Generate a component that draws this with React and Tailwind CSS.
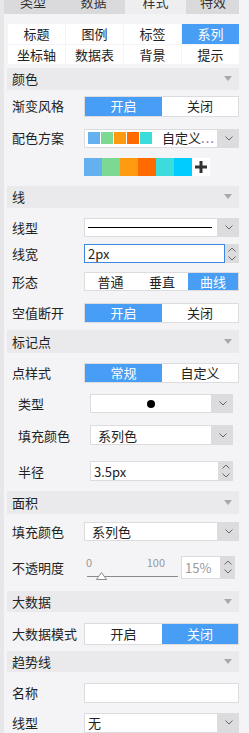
const FONT = { fontFamily: '"Noto Sans CJK SC", "Noto Sans", sans-serif' };

function Chevron({ up = false, color = '#666' }) {
  return (
    <svg width="8" height="5" viewBox="0 0 8 5" className="block">
      <path d={up ? 'M0.5 4.5 L4 1 L7.5 4.5' : 'M0.5 0.5 L4 4 L7.5 0.5'} fill="none" stroke={color} strokeWidth="1" />
    </svg>
  );
}

function Caret() {
  return (
    <svg width="8" height="5" viewBox="0 0 8 5" className="block">
      <path d="M0 0 L8 0 L4 5 Z" fill="#a9a9ad" />
    </svg>
  );
}

function Section({ title, className }) {
  return (
    <div className={`ml-[3px] flex items-center justify-between bg-[#eaeaec] pl-[5px] pr-[7px] ${className}`}>
      <span className="text-[13px] text-[#222]">{title}</span>
      <Caret />
    </div>
  );
}

function Row({ label, className, indent = false, children }) {
  return (
    <div className={`flex items-center ${className}`}>
      <div className={indent ? 'w-[86px] pl-[14px] text-[13px] text-[#222]' : 'w-[80px] pl-[8px] text-[13px] text-[#222]'}>{label}</div>
      <div className={indent ? 'h-full w-[143px]' : 'h-full w-[155px]'}>{children}</div>
    </div>
  );
}

function Toggle({ options, active, widths }) {
  return (
    <div className="flex h-full border border-[#dcdcdf] bg-white">
      {options.map((o, i) => (
        <div
          key={o}
          className={`flex items-center justify-center text-[13px] ${widths[i]} ${i === active ? 'bg-[#489ef5] text-white' : 'text-[#222]'}`}
        >
          {o}
        </div>
      ))}
    </div>
  );
}

function Select({ children }) {
  return (
    <div className="flex h-full">
      <div className="flex min-w-0 flex-1 items-center overflow-hidden whitespace-nowrap border border-[#dcdcdf] bg-white pl-[3px] text-[13px] text-[#222]">
        {children}
      </div>
      <div className="flex w-[21px] shrink-0 items-center justify-center bg-[#dcdcdf]">
        <Chevron />
      </div>
    </div>
  );
}

function Spinner({ focused, value, textColor = 'text-[#222]' }) {
  return (
    <div className="flex h-full">
      <div className={`flex flex-1 items-center bg-white pl-[3px] text-[13px] ${textColor} ${focused ? 'border border-[#3c86e4]' : 'border border-[#dcdcdf]'}`}>
        {value}
      </div>
      <div className="flex w-[14px] flex-col items-center justify-center gap-[4px] bg-[#dcdcdf]">
        <Chevron up />
        <Chevron />
      </div>
    </div>
  );
}

const swatches = ['#65b1ef', '#7bd993', '#fd9a0f', '#ff6b00', '#3cdbdc', '#00ccff'];

export default function App() {
  const tabs = [
    { t: '类型', w: 'w-[58px]' },
    { t: '数据', w: 'w-[63px]' },
    { t: '样式', w: 'w-[61px]', on: true },
    { t: '特效', w: 'w-[52px] ml-px' },
  ];
  const grid = ['标题', '图例', '标签', '系列', '坐标轴', '数据表', '背景', '提示'];
  return (
    <div className="flex h-[733px] w-[249px] overflow-hidden bg-[#f4f4f6]" style={FONT}>
      <div className="w-[4px] shrink-0 bg-[#e7e7ea]" />
      <div className="flex w-[235px] shrink-0 flex-col">
        <div className="flex h-[15px] overflow-hidden bg-[#dadadd]">
          {tabs.map((tb) => (
            <div key={tb.t} className={`h-[15px] overflow-hidden ${tb.w} ${tb.on ? 'bg-[#eeeef0]' : ''}`}>
              <div className="-mt-[6px] text-center text-[13px] leading-[15px] text-[#333]">{tb.t}</div>
            </div>
          ))}
        </div>

        <div className="ml-[4px] mt-[10px] grid h-[41px] w-[231px] grid-cols-4 gap-px">
          {grid.map((g) => (
            <div
              key={g}
              className={`flex items-center justify-center text-[13px] ${g === '系列' ? 'bg-[#489ef5] text-white' : 'bg-white text-[#222]'}`}
            >
              {g}
            </div>
          ))}
        </div>

        <Section title="颜色" className="mt-[4px] h-[23px]" />
        <Row label="渐变风格" className="mt-[6px] h-[21px]">
          <Toggle options={['开启', '关闭']} active={0} widths={['w-[77px]', 'flex-1']} />
        </Row>
        <Row label="配色方案" className="mt-[12px] h-[19px]">
          <Select>
            <div className="flex shrink-0 gap-px">
              {swatches.slice(0, 5).map((c) => (
                <div key={c} className="h-[12px] w-[12px]" style={{ backgroundColor: c }} />
              ))}
            </div>
            <span className="ml-[10px]">自定义</span>
            <span className="tracking-[1px] text-[#8a5aa8]">...</span>
          </Select>
        </Row>
        <div className="ml-[80px] mt-[10px] flex h-[18px]">
          {swatches.map((c) => (
            <div key={c} className="h-[18px] w-[18px]" style={{ backgroundColor: c }} />
          ))}
          <div className="flex h-[18px] w-[18px] items-center justify-center bg-white">
            <svg width="12" height="12" viewBox="0 0 12 12">
              <rect x="4.5" y="0" width="3" height="12" fill="#333" />
              <rect x="0" y="4.5" width="12" height="3" fill="#333" />
            </svg>
          </div>
        </div>

        <Section title="线" className="mt-[10px] h-[24px]" />
        <Row label="线型" className="mt-[10px] h-[19px]">
          <Select>
            <div className="mr-[5px] h-px flex-1 bg-black" />
          </Select>
        </Row>
        <Row label="线宽" className="mt-[7px] h-[19px]">
          <Spinner focused value="2px" />
        </Row>
        <Row label="形态" className="mt-[9px] h-[19px]">
          <Toggle options={['普通', '垂直', '曲线']} active={2} widths={['w-[51px]', 'w-[52px]', 'flex-1']} />
        </Row>
        <Row label="空值断开" className="mt-[12px] h-[20px]">
          <Toggle options={['开启', '关闭']} active={0} widths={['w-[77px]', 'flex-1']} />
        </Row>

        <Section title="标记点" className="mt-[7px] h-[24px]" />
        <Row label="点样式" className="mt-[10px] h-[20px]">
          <Toggle options={['常规', '自定义']} active={0} widths={['w-[77px]', 'flex-1']} />
        </Row>
        <Row label="类型" indent className="mt-[11px] h-[20px]">
          <Select>
            <div className="flex flex-1 justify-center pr-[3px]">
              <div className="h-[8px] w-[8px] rounded-full bg-black" />
            </div>
          </Select>
        </Row>
        <Row label="填充颜色" indent className="mt-[12px] h-[20px]">
          <Select>
            <span className="pl-[4px]">系列色</span>
          </Select>
        </Row>
        <Row label="半径" indent className="mt-[16px] h-[20px]">
          <Spinner value="3.5px" />
        </Row>

        <Section title="面积" className="mt-[10px] h-[24px]" />
        <Row label="填充颜色" className="mt-[8px] h-[19px]">
          <Select>
            <span className="pl-[4px]">系列色</span>
          </Select>
        </Row>
        <Row label="不透明度" className="mt-[15px] h-[23px]">
          <div className="flex h-full">
            <div className="flex w-[97px] flex-col pl-[2px] pr-[3px]">
              <div className="flex justify-between text-[11px] leading-[12px] text-[#9a9a9a]">
                <span>0</span>
                <span className="pr-[13px]">100</span>
              </div>
              <div className="relative mt-[4px] h-[8px]">
                <div className="absolute left-[1px] right-0 top-[4px] h-px bg-[#8a8a8a]" />
                <svg width="11" height="8" viewBox="0 0 11 8" className="absolute left-[10px] top-0">
                  <path d="M5.5 0.5 L10.5 7.5 L0.5 7.5 Z" fill="#fff" stroke="#8a8a8a" strokeWidth="1" />
                </svg>
              </div>
            </div>
            <div className="w-[54px]">
              <Spinner value="15%" textColor="text-[#9a9a9a]" />
            </div>
          </div>
        </Row>

        <Section title="大数据" className="mt-[12px] h-[23px]" />
        <Row label="大数据模式" className="mt-[11px] h-[22px]">
          <Toggle options={['开启', '关闭']} active={1} widths={['w-[77px]', 'flex-1']} />
        </Row>

        <Section title="趋势线" className="mt-[6px] h-[23px]" />
        <Row label="名称" className="mt-[11px] h-[20px]">
          <div className="h-full border border-[#dcdcdf] bg-white" />
        </Row>
        <Row label="线型" className="mt-[10px] h-[20px] shrink-0">
          <Select>
            <span>无</span>
          </Select>
        </Row>
      </div>
      <div className="w-[10px] shrink-0" />
    </div>
  );
}
